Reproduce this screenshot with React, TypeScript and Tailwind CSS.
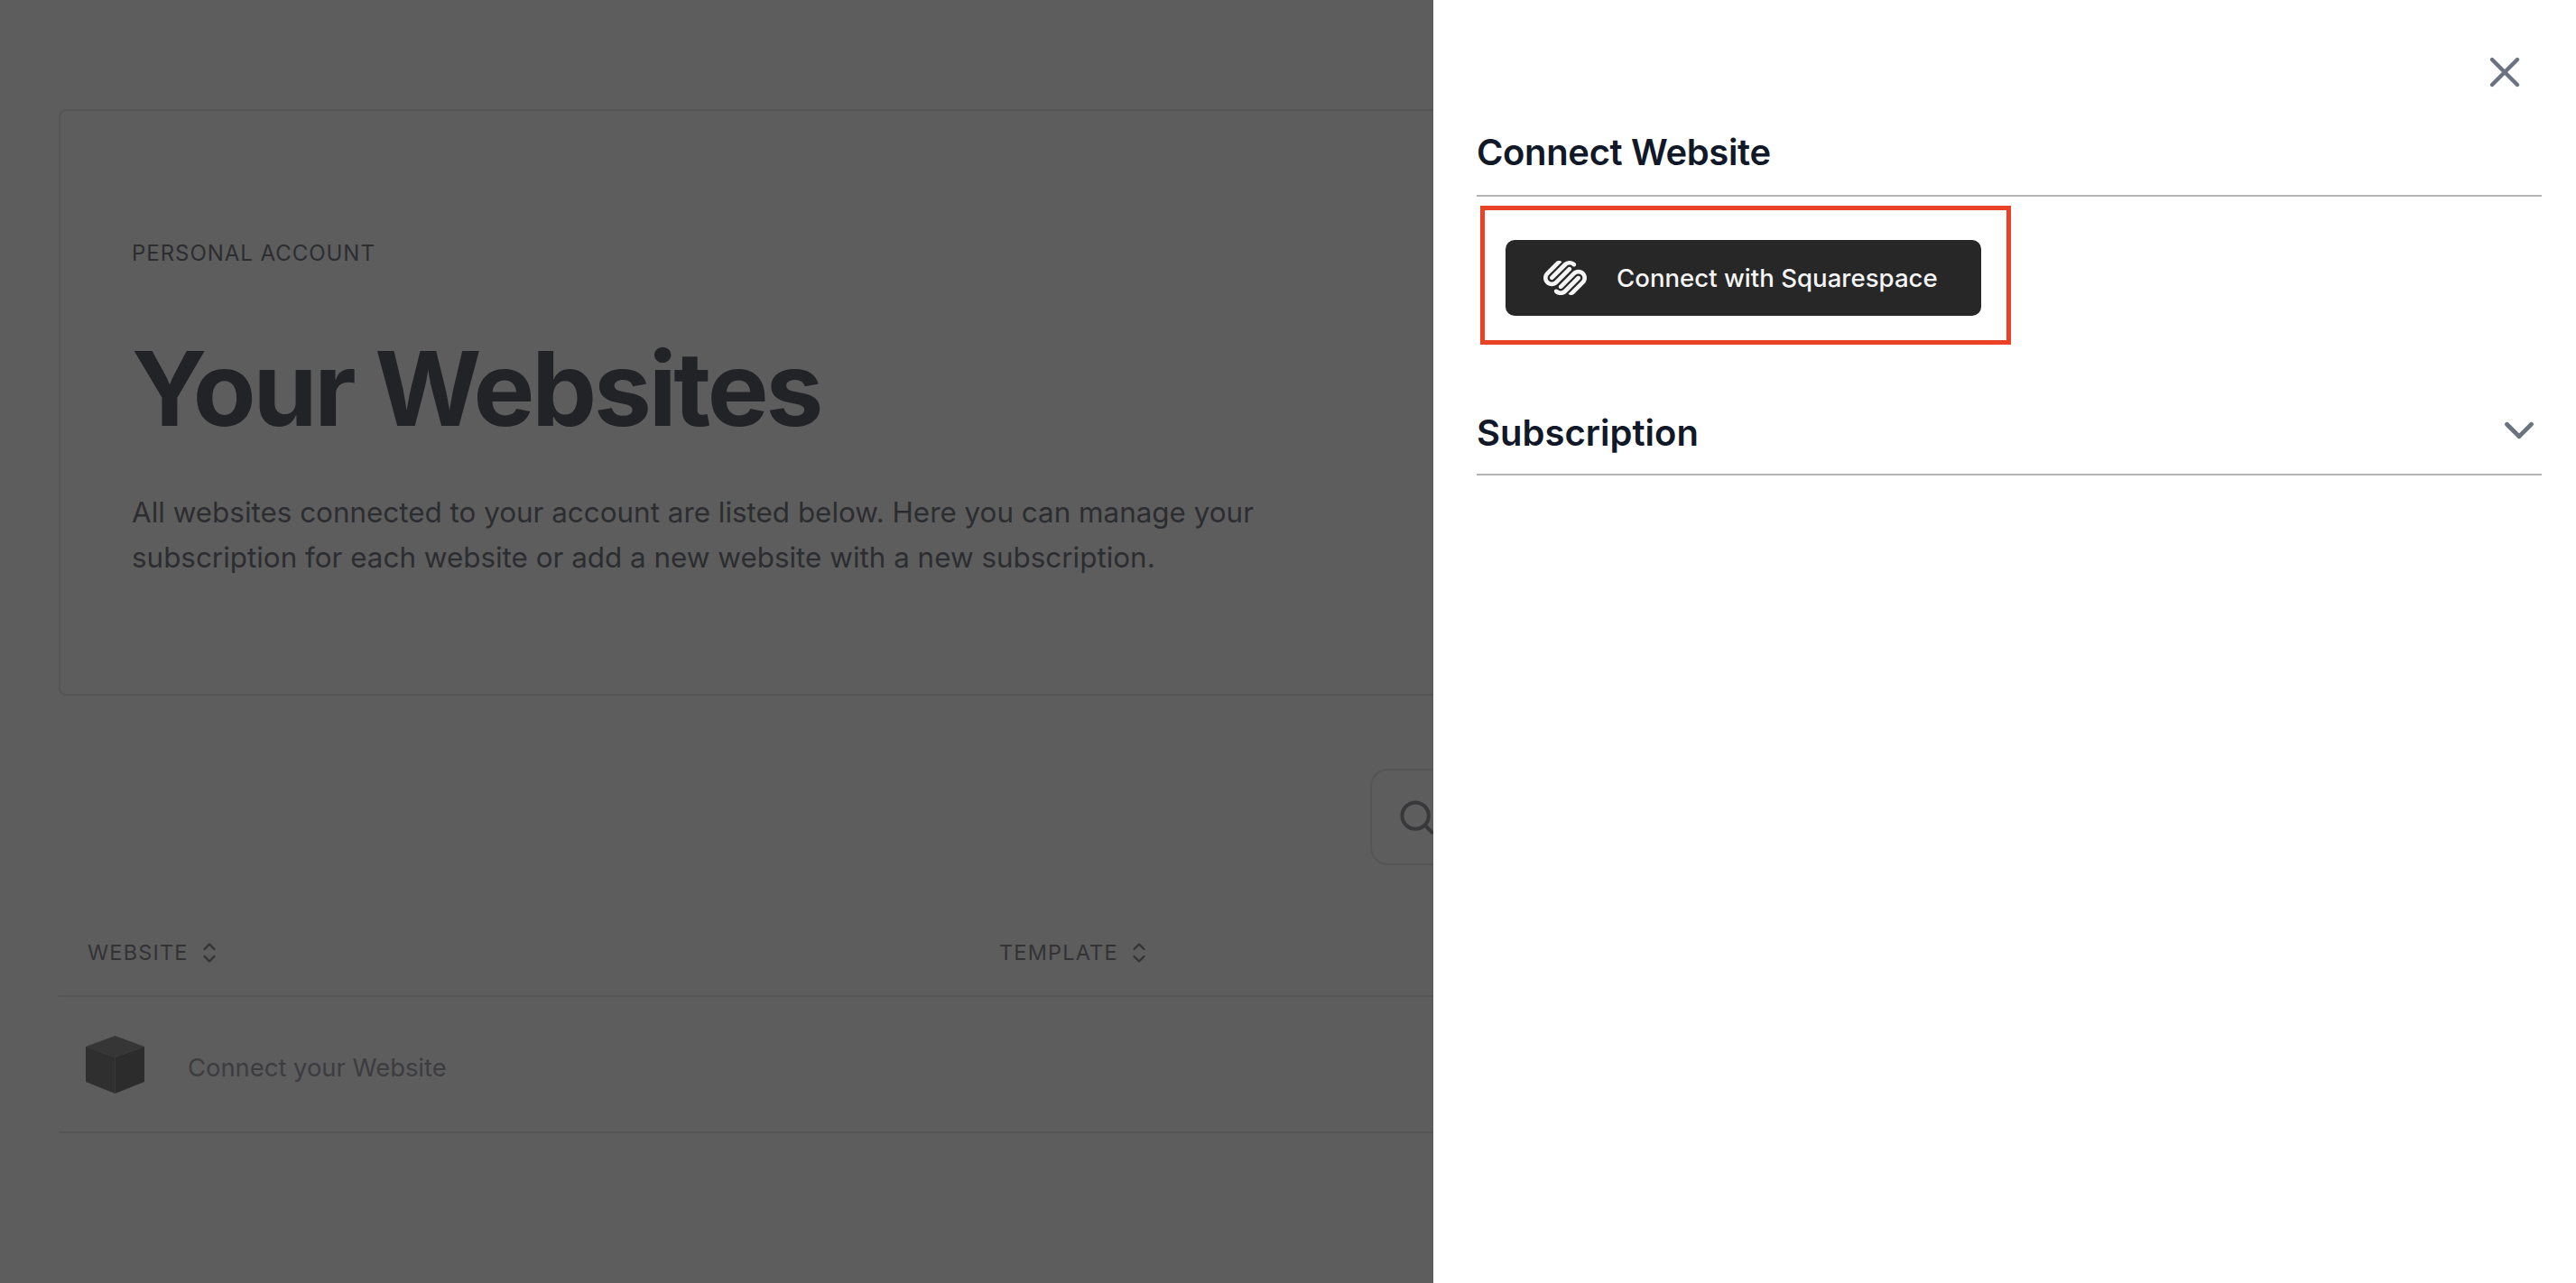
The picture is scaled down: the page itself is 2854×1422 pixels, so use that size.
import { Search, X, ChevronDown } from "lucide-react";
import { SiSquarespace } from "react-icons/si";

function Sort() {
  return (
    <svg width="16" height="24" viewBox="0 0 16 24" fill="none" stroke="#343437" strokeWidth="2.4" strokeLinecap="round" strokeLinejoin="round">
      <path d="M2.5 8 8 2.5 13.5 8" />
      <path d="M2.5 16 8 21.5 13.5 16" />
    </svg>
  );
}

function Cube() {
  return (
    <svg width="65" height="64" viewBox="0 0 65 64">
      <path d="M32.5 0 65 12 32.5 24 0 12Z" fill="#363636" />
      <path d="M0 12 32.5 24V64L0 51Z" fill="#2f2f2f" />
      <path d="M65 12 32.5 24V64L65 51Z" fill="#2c2c2c" />
    </svg>
  );
}

export default function App() {
  return (
    <div className="relative h-[1422px] w-full overflow-hidden bg-[#5d5d5d] font-['Inter','Liberation_Sans',sans-serif]">
      <div className="px-[65px] pt-[121px]">
        <section className="h-[650px] rounded-lg border-2 border-[#555556] pl-[79px] pt-[143px]">
          <p className="text-[24px] leading-[30px] tracking-[0.04em] text-[#2c2d30]">PERSONAL ACCOUNT</p>
          <h1 className="mt-[70px] text-[114px] leading-[130px] font-bold tracking-[-0.028em] text-[#222327]">Your Websites</h1>
          <p className="mt-[47px] w-[1300px] text-[31.4px] leading-[50px] text-[#2c2d30]">
            All websites connected to your account are listed below. Here you can manage your subscription for each website or add a new website with a new subscription.
          </p>
        </section>

        <div className="mt-[81px] ml-[1453px] flex h-[107px] w-[700px] items-center rounded-[20px] border-2 border-[#555556] pl-[28px]">
          <Search size={44} color="#38383b" strokeWidth={2.2} />
        </div>

        <div className="mt-[73px] flex h-[73px] items-start border-b-2 border-[#555556] pl-[32px]">
          <div className="flex w-[1010px] items-center gap-[15px]">
            <span className="text-[23.5px] leading-[48px] tracking-[0.05em] text-[#333336]">WEBSITE</span>
            <Sort />
          </div>
          <div className="flex items-center gap-[15px]">
            <span className="text-[23.5px] leading-[48px] tracking-[0.05em] text-[#333336]">TEMPLATE</span>
            <Sort />
          </div>
        </div>

        <div className="flex h-[151px] items-center gap-[48px] border-b-2 border-[#555556] pl-[30px]">
          <Cube />
          <span className="pt-[8px] text-[27.4px] text-[#3c3c40]">Connect your Website</span>
        </div>
      </div>

      <aside className="absolute top-0 right-0 bottom-0 w-[1266px] bg-white pl-[48px] pr-[38px]">
        <button className="absolute top-[52px] right-[51px] text-[#6b7280]">
          <X size={56} strokeWidth={1.9} />
        </button>

        <div className="flex h-[218px] items-end border-b-2 border-[#b4b4b4] pb-[21px]">
          <h2 className="text-[40px] leading-[52px] font-semibold tracking-[-0.009em] text-[#111827]">Connect Website</h2>
        </div>

        <div className="ml-[4px] mt-[10px] h-[154px] w-[588px] border-[5px] border-[#ea4227] pt-[33px] pl-[23px]">
          <button className="flex h-[84px] w-[527px] items-center rounded-[10px] bg-[#272727] pl-[42px]">
            <SiSquarespace size={48} color="#f5f5f5" />
            <span className="ml-[33px] pt-[2px] text-[27.6px] font-medium text-[#f5f5f5]">Connect with Squarespace</span>
          </button>
        </div>

        <div className="mt-[52px] flex h-[93px] items-center justify-between border-b-2 border-[#b4b4b4]">
          <h2 className="text-[40px] leading-[52px] font-semibold text-[#111827]">Subscription</h2>
          <ChevronDown size={54} color="#6b7280" strokeWidth={2.1} className="-mr-[2px] -translate-y-[3px]" />
        </div>
      </aside>
    </div>
  );
}
